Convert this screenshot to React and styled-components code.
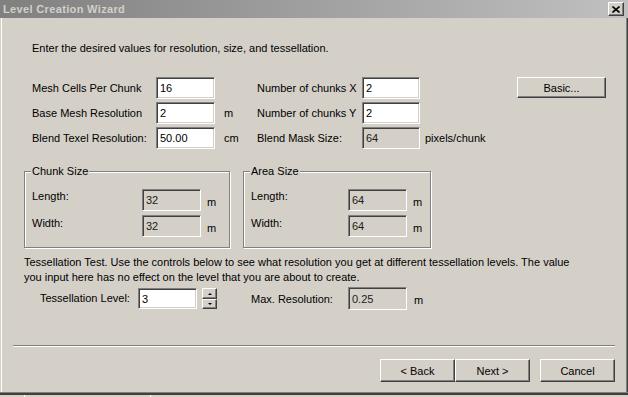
import React from "react";
import styled, { createGlobalStyle } from "styled-components";

const GlobalStyle = createGlobalStyle`
  html, body {
    margin: 0;
    padding: 0;
    background: #d4d0c8;
  }
  body {
    font-family: "Liberation Sans", Arial, sans-serif;
    font-size: 11px;
    color: #000;
  }
  * {
    box-sizing: border-box;
  }
`;

const Window = styled.div`
  display: flex;
  flex-direction: column;
  width: 628px;
  height: 397px;
  overflow: hidden;
`;

const TitleBar = styled.div`
  display: flex;
  flex: none;
  align-items: center;
  justify-content: space-between;
  height: 18px;
  padding: 0 4px 0 3px;
  background: linear-gradient(to right, #808080, #c0c0c0);
  color: #d4d0c8;
  font-size: 11px;
  font-weight: bold;
  letter-spacing: 0.35px;
`;

const CloseBtn = styled.div`
  display: flex;
  align-items: center;
  justify-content: center;
  width: 16px;
  height: 14px;
  background: #d4d0c8;
  border-top: 1px solid #fff;
  border-left: 1px solid #fff;
  border-right: 1px solid #404040;
  border-bottom: 1px solid #404040;
  box-shadow: inset -1px -1px 0 #808080;
`;

const Client = styled.div`
  display: flex;
  flex: 1;
  flex-direction: column;
  padding-top: 24px;
  border-left: 1px solid #d4d0c8;
  box-shadow: inset 1px 0 0 #fff, inset -1px 0 0 #404040, inset -2px 0 0 #808080;
`;

const FrameBottom = styled.div`
  flex: none;
  height: 3px;
  border-top: 1px solid #808080;
  background: #404040;
`;

const BehindStrip = styled.div`
  display: flex;
  flex: none;
  height: 2px;
  background: #d4d0c8;
`;

const StripCell = styled.div`
  width: ${(p) => p.w}px;
  border-right: 1px solid #fff;
`;

const Text = styled.div`
  margin-left: ${(p) => p.left}px;
  margin-top: ${(p) => p.top || 0}px;
  line-height: ${(p) => p.lh || 13}px;
  white-space: nowrap;
`;

const TopGrid = styled.div`
  display: grid;
  grid-template-columns: 124px 59px 42px 105px 58px 97px 89px;
  grid-template-rows: 22px 22px 22px;
  row-gap: 3px;
  align-items: center;
  margin: 22px 0 0 31px;
`;

const Label = styled.span`
  white-space: nowrap;
  line-height: 13px;
`;

const Unit = styled.span`
  padding-left: ${(p) => p.pad || 9}px;
  margin-top: ${(p) => p.shift || 0}px;
  white-space: nowrap;
`;

const Field = styled.div`
  display: flex;
  flex: none;
  align-items: center;
  width: ${(p) => p.w || 59}px;
  height: ${(p) => p.h || 22}px;
  padding-left: 3px;
  background: ${(p) => (p.readOnly ? "#d4d0c8" : "#fff")};
  color: ${(p) => (p.readOnly ? "#202020" : "#000")};
  border-top: 1px solid #808080;
  border-left: 1px solid #808080;
  border-right: 1px solid #fff;
  border-bottom: 1px solid #fff;
  box-shadow: inset 1px 1px 0 #404040, inset -1px -1px 0 #d4d0c8;
  margin-top: ${(p) => p.shift || 0}px;
`;

const Button = styled.button`
  width: ${(p) => p.w || 75}px;
  height: ${(p) => p.h || 23}px;
  padding: 0;
  margin: 0;
  font: inherit;
  color: #000;
  background: #d4d0c8;
  border-top: 1px solid #fff;
  border-left: 1px solid #fff;
  border-right: 1px solid #404040;
  border-bottom: 1px solid #404040;
  box-shadow: inset -1px -1px 0 #808080;
  align-self: start;
`;

const Groups = styled.div`
  display: flex;
  gap: 13px;
  margin: 15px 0 0 23px;
`;

const Group = styled.fieldset`
  width: ${(p) => p.w}px;
  height: 84px;
  margin: 0;
  padding: 0 6px;
  border: 1px solid #808080;
  box-shadow: 1px 1px 0 #fff, inset 1px 1px 0 #fff;

  legend {
    padding: 0 1px;
    line-height: 14px;
    background: #d4d0c8;
  }
`;

const GroupRows = styled.div`
  display: flex;
  flex-direction: column;
  gap: 4px;
  padding: 11px 0 0 1px;
`;

const Row = styled.div`
  display: flex;
  align-items: center;
`;

const RowLabel = styled.span`
  width: ${(p) => p.w}px;
  flex: none;
  line-height: 13px;
  margin-top: ${(p) => p.shift || 0}px;
  white-space: nowrap;
`;

const TessRow = styled.div`
  display: flex;
  align-items: center;
  height: 21px;
  margin: 3px 0 0 39px;
`;

const Spinner = styled.div`
  display: flex;
  flex-direction: column;
  margin-left: 5px;
  margin-right: 34px;
`;

const SpinBtn = styled.div`
  display: flex;
  align-items: center;
  justify-content: center;
  width: 15px;
  height: ${(p) => p.h || 10}px;
  background: #d4d0c8;
  border-top: 1px solid #fff;
  border-left: 1px solid #fff;
  border-right: 1px solid #404040;
  border-bottom: 1px solid #404040;
  box-shadow: inset -1px -1px 0 #808080;
`;

const Arrow = styled.div`
  width: 0;
  height: 0;
  border-left: 2px solid transparent;
  border-right: 2px solid transparent;
  ${(p) => (p.down ? "border-top: 2px solid #000;" : "border-bottom: 2px solid #000;")}
`;

const Separator = styled.div`
  height: 2px;
  margin: 36px 13px 0 12px;
  border-top: 1px solid #808080;
  border-bottom: 1px solid #fff;
`;

const ButtonBar = styled.div`
  display: flex;
  justify-content: flex-end;
  margin: 12px 13px 0 0;
`;

const Gap = styled.div`
  width: ${(p) => p.w}px;
`;

const CloseGlyph = () => (
  <svg width="8" height="7" viewBox="0 0 8 7">
    <path d="M0.5 0.5 L7.5 6.5 M7.5 0.5 L0.5 6.5" stroke="#000" strokeWidth="1.6" />
  </svg>
);

const SizeGroup = ({ title, w, labelW, length, width }) => (
  <Group w={w}>
    <legend>{title}</legend>
    <GroupRows>
      <Row>
        <RowLabel w={labelW} shift={-8}>Length:</RowLabel>
        <Field readOnly>{length}</Field>
        <Unit pad={6} shift={4}>m</Unit>
      </Row>
      <Row>
        <RowLabel w={labelW} shift={-6}>Width:</RowLabel>
        <Field readOnly>{width}</Field>
        <Unit pad={6} shift={3}>m</Unit>
      </Row>
    </GroupRows>
  </Group>
);

const App = () => {
  return (
    <>
      <GlobalStyle />
      <Window>
        <TitleBar>
          <span>Level Creation Wizard</span>
          <CloseBtn>
            <CloseGlyph />
          </CloseBtn>
        </TitleBar>
        <Client>
          <Text left={31}>Enter the desired values for resolution, size, and tessellation.</Text>

          <TopGrid>
            <Label>Mesh Cells Per Chunk</Label>
            <Field>16</Field>
            <span />
            <Label>Number of chunks X</Label>
            <Field w={58}>2</Field>
            <span />
            <Button w={89} h={21}>Basic...</Button>

            <Label>Base Mesh Resolution</Label>
            <Field>2</Field>
            <Unit>m</Unit>
            <Label>Number of chunks Y</Label>
            <Field w={58}>2</Field>
            <span />
            <span />

            <Label>Blend Texel Resolution:</Label>
            <Field>50.00</Field>
            <Unit>cm</Unit>
            <Label>Blend Mask Size:</Label>
            <Field w={58} readOnly>64</Field>
            <Unit pad={5}>pixels/chunk</Unit>
            <span />
          </TopGrid>

          <Groups>
            <SizeGroup title="Chunk Size" w={206} labelW={110} length="32" width="32" />
            <SizeGroup title="Area Size" w={188} labelW={97} length="64" width="64" />
          </Groups>

          <Text left={23} top={7} lh={15}>
            Tessellation Test. Use the controls below to see what resolution you get at different tessellation levels. The value
            <br />
            you input here has no effect on the level that you are about to create.
          </Text>

          <TessRow>
            <RowLabel w={98}>Tessellation Level:</RowLabel>
            <Field h={21}>3</Field>
            <Spinner>
              <SpinBtn h={11}>
                <Arrow />
              </SpinBtn>
              <SpinBtn>
                <Arrow down />
              </SpinBtn>
            </Spinner>
            <RowLabel w={97} shift={2}>Max. Resolution:</RowLabel>
            <Field h={23} readOnly>0.25</Field>
            <Unit pad={7} shift={2}>m</Unit>
          </TessRow>

          <Separator />

          <ButtonBar>
            <Button>&lt; Back</Button>
            <Button>Next &gt;</Button>
            <Gap w={10} />
            <Button>Cancel</Button>
          </ButtonBar>
        </Client>
        <FrameBottom />
        <BehindStrip>
          <StripCell w={25} />
          <StripCell w={126} />
        </BehindStrip>
      </Window>
    </>
  );
};

export default App;
